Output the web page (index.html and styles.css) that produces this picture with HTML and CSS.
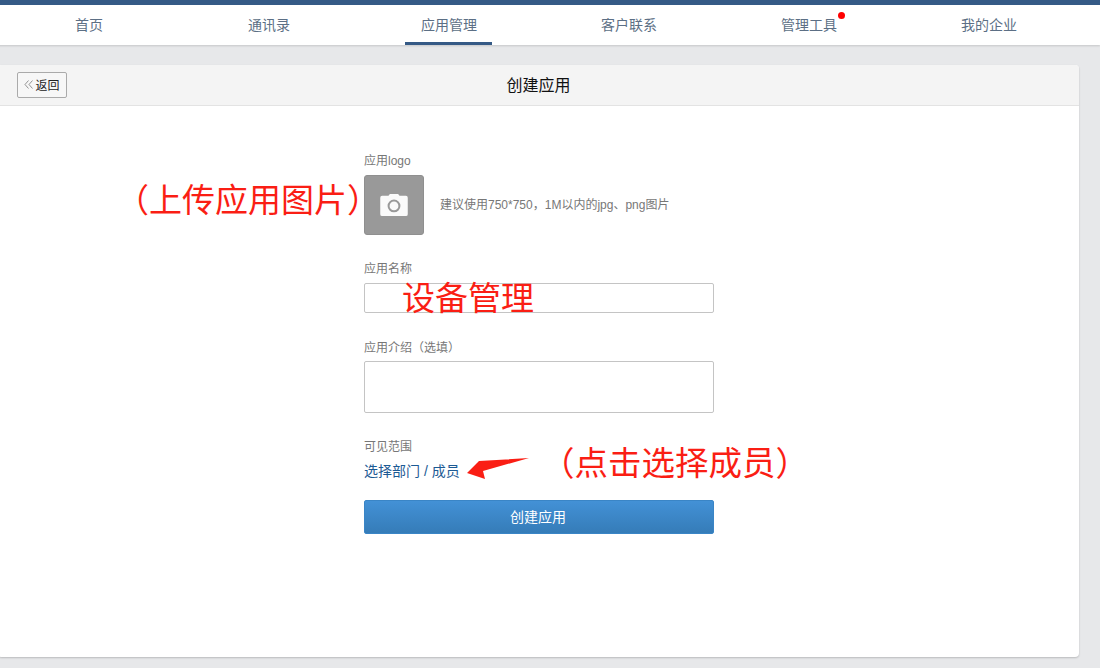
FILE: index.html
```html
<!DOCTYPE html>
<html lang="zh">
<head>
<meta charset="utf-8">
<title>创建应用</title>
<link rel="stylesheet" href="styles.css">
</head>
<body>
<nav class="nav">
  <a class="tab">首页</a>
  <a class="tab">通讯录</a>
  <a class="tab active"><span class="tab-label">应用管理</span></a>
  <a class="tab">客户联系</a>
  <a class="tab"><span class="tab-dotted">管理工具<i class="dot"></i></span></a>
  <a class="tab">我的企业</a>
</nav>
<main class="card">
  <header class="card-head">
    <button class="back"><svg class="back-icon" viewBox="0 0 9 9" width="9" height="9"><path d="M4.500 .5 1 4.500l3.500 4M8.500 .5 5 4.500l3.500 4" fill="none" stroke="#888" stroke-width=".9"/></svg>返回</button>
    <h1 class="card-title">创建应用</h1>
  </header>
  <form class="form">
    <div class="label">应用logo</div>
    <div class="logo-row">
      <div class="logo">
        <svg viewBox="0 0 30 24" width="28" height="22"><path fill="#fafafa" fill-rule="evenodd" d="M2 2h7l1.500-2h9L21 2h7a2 2 0 0 1 2 2v18a2 2 0 0 1-2 2H2a2 2 0 0 1-2-2V4a2 2 0 0 1 2-2Zm13 4a7 7 0 1 0 0 14 7 7 0 0 0 0-14Zm0 2.200a4.800 4.800 0 1 1 0 9.600 4.800 4.800 0 0 1 0-9.600Z"/></svg>
      </div>
      <span class="hint">建议使用750*750，1M以内的jpg、png图片</span>
    </div>
    <div class="label name-label">应用名称</div>
    <div class="input"></div>
    <div class="label intro-label">应用介绍（选填）</div>
    <div class="textarea"></div>
    <div class="label scope-label">可见范围</div>
    <a class="scope-link">选择部门 / 成员</a>
    <button class="submit" type="button">创建应用</button>
  </form>
</main>
<div class="note note-logo">（上传应用图片）</div>
<div class="note note-name">设备管理</div>
<div class="note note-scope">（点击选择成员）</div>
<svg class="arrow" viewBox="0 0 64 24" width="64" height="24"><path fill="#fa1e14" d="M62 1 12 4 0 16l18 6-2-8Z"/></svg>
</body>
</html>
```
FILE: styles.css
```css
* { box-sizing: border-box; }
html, body { height: 100%; }
body {
  margin: 0;
  background: #e7e8ea;
  font-family: "Liberation Sans", "Noto Sans CJK SC", sans-serif;
  color: #666;
  overflow: hidden;
  position: relative;
}
.nav {
  display: grid;
  grid-template-columns: repeat(6, 180px);
  height: 45px;
  margin-left: -2px;
  background: #fff;
  border-top: 5px solid #355a86;
  box-shadow: 0 1px 2px rgba(0,0,0,.15);
}
.tab {
  display: flex;
  justify-content: center;
  align-items: center;
  height: 40px;
  padding: 0 0 2px 2px;
  font-size: 14px;
  color: #5c6f85;
}
.tab.active { padding: 0; }
.tab.active .tab-label {
  display: flex;
  align-items: center;
  height: 40px;
  padding: 0 14.500px 0 16.500px;
  border-bottom: 3px solid #355a86;
}
.tab-dotted { position: relative; }
.dot {
  position: absolute;
  top: -2px;
  right: -8px;
  width: 7px;
  height: 7px;
  border-radius: 50%;
  background: #f00;
}
.card {
  margin: 20px 21px 0 -2px;
  height: 592px;
  background: #fff;
  border-radius: 4px;
  box-shadow: 0 1px 2px rgba(0,0,0,.2);
}
.card-head {
  position: relative;
  display: flex;
  align-items: center;
  justify-content: center;
  height: 41px;
  padding-bottom: 2px;
  background: #f4f4f4;
  border-bottom: 1px solid #e3e3e3;
  border-radius: 4px 4px 0 0;
}
.back {
  position: absolute;
  left: 19px;
  top: 7px;
  display: flex;
  align-items: center;
  justify-content: center;
  gap: 2px;
  width: 50px;
  height: 26px;
  padding: 0 0 2px;
  background: #f7f7f7;
  border: 1px solid #aaa;
  border-radius: 2px;
  font: 12px "Liberation Sans", "Noto Sans CJK SC", sans-serif;
  color: #222;
}
.card-title {
  margin: 0;
  font-size: 16px;
  font-weight: 400;
  color: #111;
}
.form {
  width: 350px;
  margin-left: 366px;
  padding-top: 46px;
}
.label {
  font-size: 12px;
  line-height: 18px;
  color: #777;
}
.logo-row {
  display: flex;
  align-items: center;
  gap: 16px;
  margin-top: 5px;
}
.logo {
  display: flex;
  align-items: center;
  justify-content: center;
  width: 60px;
  height: 60px;
  background: #999;
  border: 1px solid #8f8f8f;
  border-radius: 3px;
}
.hint {
  padding-bottom: 4px;
  font-size: 12px;
  color: #777;
}
.name-label { margin-top: 25px; }
.input, .textarea {
  background: #fff;
  border: 1px solid #c4c4c4;
  border-radius: 2px;
}
.input { height: 30px; margin-top: 5px; }
.intro-label { margin-top: 26px; }
.textarea { height: 52px; margin-top: 4px; }
.scope-label { margin-top: 25px; }
.scope-link {
  display: block;
  margin-top: 5px;
  font-size: 14px;
  line-height: 20px;
  color: #1c5a94;
}
.submit {
  display: block;
  width: 350px;
  height: 34px;
  margin-top: 19px;
  padding: 0 2px 2px 0;
  border: 1px solid #3a85c6;
  border-radius: 2px;
  background: linear-gradient(#4391d6, #357cb8);
  font: 14px "Liberation Sans", "Noto Sans CJK SC", sans-serif;
  color: #fff;
}
.note {
  position: absolute;
  font-family: "Noto Sans CJK SC", sans-serif;
  font-size: 33px;
  font-weight: 400;
  line-height: 40px;
  color: #fa1e14;
  white-space: nowrap;
}
.note-logo { left: 116px; top: 178px; }
.note-name { left: 402px; top: 276px; }
.note-scope { left: 541px; top: 441px; font-size: 33.500px; }
.arrow { position: absolute; left: 467px; top: 457px; }
```
